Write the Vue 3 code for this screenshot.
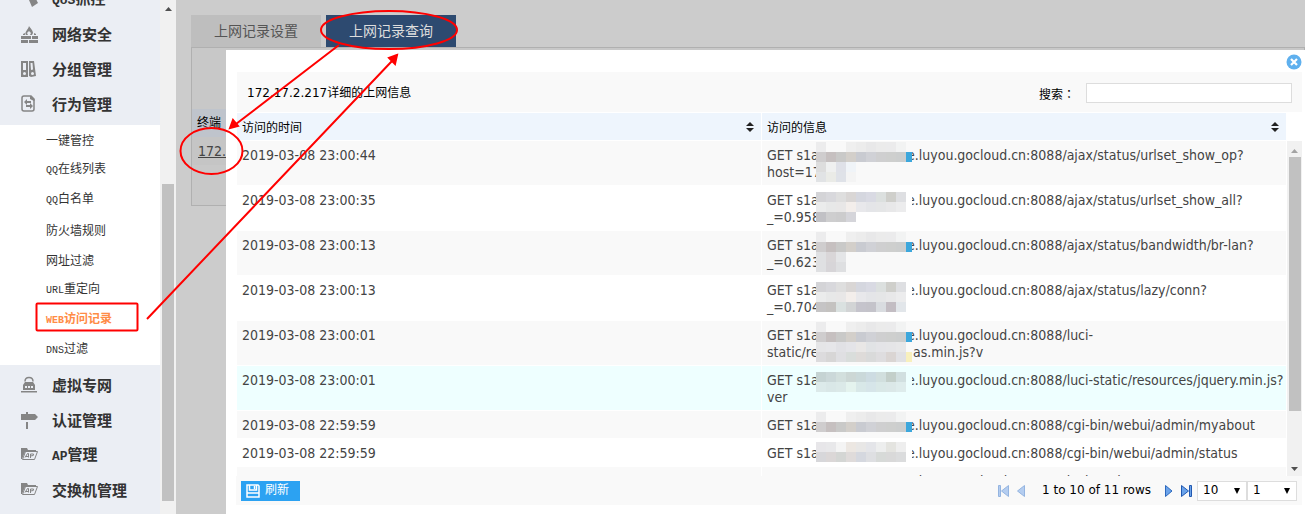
<script setup>
import { ref } from 'vue'

const before = [
  { latin: 'QoS', text: '抓控', icon: 'qos' },
  { text: '网络安全', icon: 'fire' },
  { text: '分组管理', icon: 'group' },
  { text: '行为管理', icon: 'action' },
]
const subs = [
  { text: '一键管控' },
  { latin: 'QQ', text: '在线列表' },
  { latin: 'QQ', text: '白名单' },
  { text: '防火墙规则' },
  { text: '网址过滤' },
  { latin: 'URL', text: '重定向' },
  { latin: 'WEB', text: '访问记录', active: true },
  { latin: 'DNS', text: '过滤' },
]
const after = [
  { text: '虚拟专网', icon: 'lock' },
  { text: '认证管理', icon: 'sign' },
  { latin: 'AP', text: '管理', icon: 'folder' },
  { text: '交换机管理', icon: 'folder' },
]

const icons = {
  qos: '<path d="M3 2l7-2 2 3-6 3zM8 10l6-3 3 6-6 4z"/>',
  fire: '<path fill-rule="evenodd" d="M8 1c1 2 4 4 4 7l-1 2H9l1-2-2-2-2 2 1 2H5C3 7 7 5 8 1z"/><path d="M2 9l2-1v2H2zM13 8l2 1v1h-2zM0 11h10v3H0zM11 11h6v3h-6zM0 15h7v3H0zM8 15h9v3H8z"/>',
  group: '<path fill-rule="evenodd" d="M0 1h7v16H0zM2 3v7h3V3zM2 13.500a1.500 1.500 0 1 0 3 0 1.500 1.500 0 0 0-3 0z"/><path fill-rule="evenodd" d="M8 1h5l2 15-5 1-2-1zM9.500 3l.500 7 2-.500-.500-6.500zM10 13.500a1.500 1.500 0 1 0 3 0 1.500 1.500 0 0 0-3 0z"/>',
  action: '<path fill="none" stroke="#858585" stroke-width="1.500" d="M3 1h7l3 3v10q0 2-2 2H3q-2 0-2-2V3q0-2 2-2z"/><path d="M9 1h1l4 4-1 1-4-2zM3 7l3-3v2h4v2H6v2zM12 11l-3 3v-2H5v-2h4V8z"/>',
  lock: '<path fill="none" stroke="#858585" stroke-width="1.500" d="M4 5.500q0-4 4-4t4 4"/><path fill-rule="evenodd" d="M4 6h8l2 3v5H2V9zM4 10v2h2v-2zM7 10v2h2v-2zM10 10v2h2v-2zM0 15h16v1.500H0z"/>',
  sign: '<path d="M0 3h5V1h2v2h7l3 3-3 3H0zM5 11h2v7H5z"/>',
  folder: '<path d="M0 2h6l1 2h8v2H4L1 13H0z"/><path fill="none" stroke="#858585" d="M4.500 5.500h12l-3 8h-12z"/><path fill="none" stroke="#858585" d="M4 11.500l2.500-4h1v4M5 10.500h2.500M9.500 12V8h3q1 2-3 2"/>',
}

const L = ['#ececed', '#f9f9f9', '#f9f9f9', '#efefef', '#ececec', '#e8e8e9', '#ebebeb', '#ebebec', '#f2f3f3']
const D = ['#cfcdce', '#c6c0c0', '#c9c9c8', '#d3cfca', '#c9cbd1', '#d0d1d6', '#cfcfd0', '#cecfce', '#cccece', '#3ca7dc']
const A = ['#d4d4d7', '#d8d8dc', '#dedede', '#d9d6d5', '#d5d7df', '#d9dae3', '#dce0df', '#cfcfcb', '#dedfe2']
const B = ['#ebecec', '#e7e8e8', '#e8e7e7', '#f3eeeb', '#e8e8eb', '#e4e5e8', '#e5e6e7', '#e8e8e9', '#ececed']

const rows = [
  { time: '2019-03-08 23:00:44', rest: '.luyou.gocloud.cn:8088/ajax/status/urlset_show_op?', second: 'host=17', dy: 1,
    cells: [L, D, ['#dddddd', '#eff0f0', '#dfe1e8', '#f0f4f8'], ['#e1e3e5', '#eaebe7', '#dfe2e8', '#f4f4f4']] },
  { time: '2019-03-08 23:00:35', rest: '.luyou.gocloud.cn:8088/ajax/status/urlset_show_all?', second: '_=0.958', dy: 6,
    cells: [A, B, ['#c1c1c5', '#cececf', '#cccccd', '#d5d5da']] },
  { time: '2019-03-08 23:00:13', rest: '.luyou.gocloud.cn:8088/ajax/status/bandwidth/br-lan?', second: '_=0.623', dy: 1,
    cells: [L, D, ['#dfe0e2', '#d9d6d8', '#e4e5e7'], ['#dfe0e2', '#d7d5d8', '#dedfe1']] },
  { time: '2019-03-08 23:00:13', rest: '.luyou.gocloud.cn:8088/ajax/status/lazy/conn?', second: '_=0.704', dy: 6,
    cells: [A, B, ['#c5c4c5', '#c4c2c0', '#dae1e0', '#d2d4d5', '#c5c4cc', '#c4c3ca', '#d9dce0', '#c3bdc3', '#e2e6ea']] },
  { time: '2019-03-08 23:00:01', rest: '.luyou.gocloud.cn:8088/luci-', second: 'static/re', tail: 'as.min.js?v', dy: 1,
    cells: [L, D, ['#e5e5e7', '#e6e6e9', '#e1e1e5', '#e4e4e8', '#e9e7e6', '#e1e3e5', '#e4e4e7', '#e5e5e7', '#e7e7e8'],
      ['#dcdbdd', '#d7d6d6', '#dfdfe2', '#d9dddb', '#dedbd9', '#d9dada', '#dedddf', '#dad5d3', '#e1e1e4', '#f8f0bd']] },
  { time: '2019-03-08 23:00:01', rest: '.luyou.gocloud.cn:8088/luci-static/resources/jquery.min.js?', second: 'ver', dy: 6, hover: true,
    cells: [['#c5d3d3', '#cbd8d9', '#d2dfdd', '#ccd7d5', '#cad9da', '#cddce2', '#d1dfde', '#c3cfca', '#d1dfe0'],
      ['#dceaea', '#d9e7e7', '#dbe9e8', '#e4f3ee', '#d8e8e8', '#d6e5e9', '#d9e8e7', '#dbe8e8', '#deecec']] },
  { time: '2019-03-08 22:59:59', rest: '.luyou.gocloud.cn:8088/cgi-bin/webui/admin/myabout', dy: 1, cells: [L, D] },
  { time: '2019-03-08 22:59:59', rest: '.luyou.gocloud.cn:8088/cgi-bin/webui/admin/status', dy: 3,
    cells: [['#e7e6e9', '#e8e8ea', '#f4f4f4', '#ece7e2', '#e8e7e6', '#e4e5e9', '#edeeee', '#e4e4e0', '#eeeeee'],
      ['#d7d7da', '#dbd7d7', '#d4d6d4', '#dfdbda', '#d5d8df', '#dedfe2', '#d7dad8', '#d9d9d9', '#dbdcdd']] },
  { time: '2019-03-08 22:59:58', rest: '.luyou.gocloud.cn:8088/luci-static/resources', second: 'ver', dy: 1, cells: [[]] },
]

const query = ref('')
const size = ref('10')
const page = ref('1')
</script>

<template>
  <div class="page">
    <aside class="side">
      <nav>
        <a v-for="m in before" :key="m.text" href="#" class="item">
          <svg width="18" height="18" viewBox="0 0 18 18" v-html="icons[m.icon]"></svg>
          <span><i v-if="m.latin">{{ m.latin }}</i>{{ m.text }}</span>
        </a>
        <div class="subs">
          <a v-for="s in subs" :key="s.text" href="#" :class="{ active: s.active }"><span><i v-if="s.latin">{{ s.latin }}</i>{{ s.text }}</span></a>
        </div>
        <a v-for="m in after" :key="m.text" href="#" class="item">
          <svg width="18" height="18" viewBox="0 0 18 18" v-html="icons[m.icon]"></svg>
          <span><i v-if="m.latin">{{ m.latin }}</i>{{ m.text }}</span>
        </a>
      </nav>
    </aside>
    <div class="bar side-bar">
      <svg width="7" height="4"><path d="M0 4L3.500 0 7 4z" fill="#505050" /></svg>
      <div class="thumb"></div>
    </div>

    <main class="main">
      <div class="tabs">
        <button type="button" class="tab">上网记录设置</button>
        <button type="button" class="tab on">上网记录查询</button>
      </div>
      <section class="panel">
        <div class="panel-head">终端</div>
        <div class="panel-row"><a href="#">172.</a></div>
      </section>

      <section class="dialog">
        <button type="button" class="close" aria-label="关闭">
          <svg width="16" height="16" viewBox="0 0 16 16"><circle cx="8" cy="8" r="7.500" fill="#5fb0ee" /><path d="M5 5l6 6M11 5l-6 6" stroke="#fff" stroke-width="2.200" /></svg>
        </button>
        <header class="title">
          <h2>172.17.2.217详细的上网信息</h2>
          <label for="q">搜索：</label>
          <input id="q" v-model="query" type="text">
        </header>
        <div class="list">
          <div class="clip">
            <table>
              <thead>
                <tr>
                  <th v-for="h in ['访问的时间', '访问的信息']" :key="h">
                    <div class="th">{{ h }}<svg width="8" height="10"><path d="M0 4L4 0 8 4zM0 6h8L4 10z" fill="#222" /></svg></div>
                  </th>
                </tr>
              </thead>
              <tbody>
                <tr v-for="(r, k) in rows" :key="k" :class="{ odd: k % 2 === 0, hover: r.hover }">
                  <td>{{ r.time }}</td>
                  <td>
                    <div><span class="lead">GET s1a</span>e{{ r.rest }}</div>
                    <div v-if="r.second"><span class="lead wide">{{ r.second }}</span>{{ r.tail }}</div>
                    <svg class="mosaic" width="96" height="44" shape-rendering="crispEdges">
                      <rect class="back" :y="r.dy" width="96" :height="r.cells.length * 10" />
                      <g v-for="(line, y) in r.cells" :key="y">
                        <rect v-for="(c, x) in line" :key="x" :x="x * 10" :y="r.dy + y * 10" width="10" height="10" :fill="c" />
                      </g>
                    </svg>
                  </td>
                </tr>
              </tbody>
            </table>
          </div>
          <div class="bar list-bar">
            <svg width="7" height="4"><path d="M0 4L3.500 0 7 4z" fill="#a3a3a3" /></svg>
            <div class="thumb"></div>
            <svg class="down" width="7" height="4"><path d="M0 0h7L3.500 4z" fill="#505050" /></svg>
          </div>
        </div>
        <footer class="foot">
          <button type="button" class="refresh">
            <svg width="14" height="14" viewBox="0 0 14 14" fill="none" stroke="#fff" stroke-width="1.500"><path d="M1 1h11l1 1v11H1zM3.500 1v5h7V1M1 9h12" /><path d="M8.500 2v3" /></svg>
            刷新
          </button>
          <div class="pager">
            <button type="button" aria-label="首页"><svg width="11" height="12"><path d="M.5.500h2v11h-2zM10.500.500v11L3.500 6z" fill="#b4cdf0" stroke="#94b4e0" /></svg></button>
            <button type="button" aria-label="上一页"><svg width="8" height="12"><path d="M7.500.500v11L.5 6z" fill="#b4cdf0" stroke="#94b4e0" /></svg></button>
            <span>1 to 10 of 11 rows</span>
            <button type="button" aria-label="下一页"><svg width="8" height="12"><path d="M.5.500v11L7 6z" fill="#6ba3ea" stroke="#2c68bd" /></svg></button>
            <button type="button" aria-label="末页"><svg width="11" height="12"><path d="M8.500.500h2v11h-2zM.5.500v11L7.500 6z" fill="#6ba3ea" stroke="#2158b0" /></svg></button>
            <div class="selects">
              <div class="sel"><select v-model="size" aria-label="每页行数"><option>10</option><option>20</option></select><svg width="6" height="6"><path d="M0 0h6L3 6z" /></svg></div>
              <div class="sel"><select v-model="page" aria-label="页码"><option>1</option><option>2</option></select><svg width="6" height="6"><path d="M0 0h6L3 6z" /></svg></div>
            </div>
          </div>
        </footer>
      </section>
    </main>

    <svg class="marks" width="480" height="340" fill="none" stroke="#f00" stroke-width="2">
      <ellipse cx="389" cy="30" rx="68" ry="19" />
      <ellipse cx="211.500" cy="151" rx="31" ry="23" />
      <rect x="36.500" y="303.500" width="101" height="27" rx="1" />
      <path d="M339 45L236 124M147 319L392 61" />
      <path d="M230 128l3-8 5 6zM397 55l-8 3 6 6z" fill="#f00" />
    </svg>
  </div>
</template>

<style>
body { margin: 0; }
</style>

<style scoped>
* { box-sizing: border-box; }
button { font: inherit; border: 0; padding: 0; background: none; }
svg { display: block; flex: none; }
.page {
  position: relative;
  display: flex;
  height: 100vh;
  overflow: hidden;
  font: 12px/17px "DejaVu Sans", "Noto Sans CJK SC", sans-serif;
  color: #000;
}
.side { flex: 0 0 160px; background: #ebeef4; overflow: hidden; font-family: "Noto Sans CJK SC", sans-serif; }
.side nav { margin-top: -19px; }
.side i { font-style: normal; font-family: "Liberation Mono", monospace; }
.item {
  display: flex;
  align-items: center;
  gap: 13px;
  height: 35px;
  padding-left: 21px;
  color: #333;
  font-size: 15px;
  font-weight: 700;
  text-decoration: none;
}
.item svg { fill: #858585; }
.item i { font-size: 13px; }
.subs { margin: 4px 0 2px; background: #fff; }
.subs a { display: flex; align-items: center; height: 30px; padding: 0 0 2px 46px; color: #333; text-decoration: none; }
.subs i { font-size: 10px; }
.subs .active { color: #ff8c46; font-weight: 700; }

.bar { display: flex; flex-direction: column; align-items: center; background: #f1f1f1; }
.thumb { background: #c1c1c1; width: 12px; }
.side-bar { flex: 0 0 16px; padding: 7px 0 13px; }
.side-bar .thumb { flex: 1; margin-top: 173px; }

.main { position: relative; flex: 1; min-width: 0; padding: 15px 0 0 15px; background: #ccc; }
.tabs { display: flex; gap: 5px; }
.tab { width: 130px; height: 32px; background: #bebebe; color: #555; font-size: 14px; }
.tab.on { background: #2d4a70; color: #ddd; }
.panel { height: 159px; padding-top: 61px; border: 1px solid #b0b0b0; background: #c8c8c8; }
.panel-head { height: 28px; padding-left: 5px; line-height: 28px; background: #bfc4cc; }
.panel-row { height: 28px; padding-left: 6px; background: #c5c5c5; font: 14px/28px "DejaVu Sans Condensed", "DejaVu Sans", sans-serif; }
.panel-row a { color: #444; }

.dialog {
  position: absolute;
  inset: 50px 0 0 50px;
  display: flex;
  flex-direction: column;
  padding: 22px 3px 9px 10px;
  background: #fff;
}
.close { position: absolute; top: 4px; right: 3px; }
.title { display: flex; align-items: center; height: 40px; margin-left: 1px; padding: 2px 10px 0; background: #f9f9f9; }
.title h2 { flex: 1; margin: 0; font-size: 12px; font-weight: 400; }
.title label { font-family: "Noto Sans CJK TC", sans-serif; }
.title input { width: 206px; height: 20px; margin-left: 11px; padding: 0 4px; border: 1px solid #ddd; background: #fff; font: inherit; }
.list { display: flex; flex: 1; min-height: 0; }
.clip { flex: 1; min-width: 0; overflow: hidden; }
table {
  width: 100%;
  table-layout: fixed;
  border-collapse: separate;
  border-spacing: 1px;
  color: #444;
  font: 14px/17px "DejaVu Sans Condensed", "DejaVu Sans", sans-serif;
}
th { padding: 5px; background: #eef5fd; color: #000; font: 12px/17px "Noto Sans CJK SC", sans-serif; }
.th { display: flex; align-items: center; justify-content: space-between; padding-right: 2px; }
td { position: relative; padding: 6px 5px 4px; vertical-align: top; white-space: nowrap; background: #fff; }
.odd td { background: #f9f9f9; }
.hover td { background: #eff; }
.back { fill: #fff; }
.odd .back { fill: #f9f9f9; }
.hover .back { fill: #eff; }
.lead { display: inline-block; width: 140px; }
.wide { width: 146px; }
.mosaic { position: absolute; left: 54px; top: 0; }
.list-bar { flex: 0 0 15px; margin-top: 29px; padding: 8px 0 5px; }
.list-bar .thumb { height: 254px; margin: 4px 0 auto; }

.foot { display: flex; justify-content: space-between; align-items: center; height: 29px; padding: 0 5px; background: #f9f9f9; }
.refresh { display: flex; align-items: center; gap: 5px; height: 20px; padding: 0 11px 0 5px; background: #2ca2f2; color: #fff; }
.pager { display: flex; align-items: center; }
.pager button { margin-right: 8px; }
.pager span { margin: 0 14px 0 9px; }
.selects { display: flex; margin-left: -3px; }
.sel { position: relative; width: 50px; }
.sel select { display: block; width: 50px; height: 20px; padding: 0 5px; appearance: none; border: 1px solid #ddd; border-radius: 0; background: #fff; color: #000; font: inherit; }
.sel svg { position: absolute; right: 7px; top: 7px; pointer-events: none; }
.marks { position: absolute; left: 0; top: 0; pointer-events: none; }
</style>
